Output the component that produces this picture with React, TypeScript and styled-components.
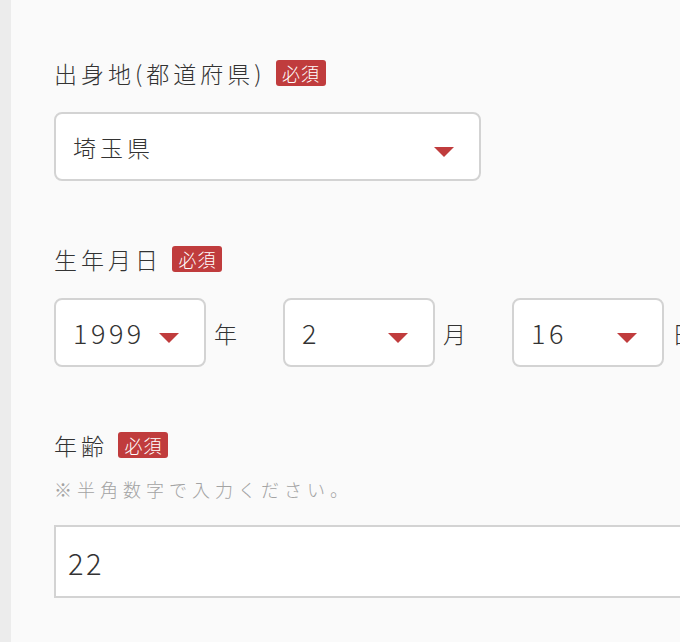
import React from "react";
import styled, { createGlobalStyle } from "styled-components";

const GlobalStyle = createGlobalStyle`
  html, body {
    margin: 0;
    padding: 0;
    background: #fafafa;
    overflow: hidden;
  }
  body {
    font-family: "Noto Sans CJK JP", "Noto Sans", sans-serif;
    color: #333;
  }
`;

const Page = styled.div`
  display: flex;
  width: 680px;
  height: 642px;
  overflow: hidden;
`;

const SideStrip = styled.div`
  flex: 0 0 11px;
  background: #ececec;
`;

const Main = styled.main`
  flex: 1;
  background: #fafafa;
  padding: 60px 0 0 43px;
  overflow: hidden;
`;

const Field = styled.section`
  display: flex;
  flex-direction: column;
  margin-bottom: 65px;
`;

const LabelRow = styled.div`
  display: flex;
  align-items: center;
  height: 26px;
  gap: 10px;
  margin-bottom: 26px;
  white-space: nowrap;
`;

const LabelText = styled.span`
  font-size: 23px;
  font-weight: 300;
  letter-spacing: 4px;
  line-height: 26px;
  color: #333;
`;

const Badge = styled.span`
  display: inline-flex;
  align-items: center;
  justify-content: center;
  width: 50px;
  height: 26px;
  border-radius: 3px;
  background: #c03c3d;
  color: #fff;
  font-size: 18px;
  font-weight: 300;
  letter-spacing: 1px;
  text-indent: 1px;
`;

const Hint = styled.p`
  margin: -6px 0 25px;
  font-size: 18px;
  font-weight: 300;
  line-height: 22px;
  letter-spacing: 5px;
  color: #a3a3a3;
  white-space: nowrap;
`;

const SelectBox = styled.div<{ $width: number }>`
  box-sizing: border-box;
  display: flex;
  align-items: center;
  justify-content: space-between;
  width: ${(p) => p.$width}px;
  height: 69px;
  padding: 0 25px 0 17px;
  background: #fff;
  border: 2px solid #d3d3d3;
  border-radius: 8px;
  flex: 0 0 auto;
`;

const SelectValue = styled.span<{ $numeric?: boolean }>`
  font-size: ${(p) => (p.$numeric ? 27 : 23)}px;
  font-weight: 300;
  letter-spacing: ${(p) => (p.$numeric ? 3.5 : 4)}px;
  color: #333;
`;

const Arrow = styled.span`
  width: 0;
  height: 0;
  margin-top: 10px;
  border-left: 10.5px solid transparent;
  border-right: 10.5px solid transparent;
  border-top: 10px solid #c03c3d;
`;

const DateRow = styled.div`
  display: flex;
  align-items: center;
  gap: 46px;
  white-space: nowrap;
`;

const DateGroup = styled.div`
  display: flex;
  align-items: center;
  gap: 8px;
  flex: 0 0 auto;
`;

const Unit = styled.span`
  font-size: 23px;
  font-weight: 300;
  color: #333;
`;

const TextInput = styled.div`
  box-sizing: border-box;
  display: flex;
  align-items: center;
  width: 700px;
  height: 73px;
  padding: 0 12px;
  background: #fff;
  border: 2px solid #d3d3d3;
  font-size: 29px;
  font-weight: 300;
  letter-spacing: 2.5px;
  color: #333;
`;

const Select = ({
  value,
  width,
  numeric,
}: {
  value: string;
  width: number;
  numeric?: boolean;
}) => (
  <SelectBox $width={width}>
    <SelectValue $numeric={numeric}>{value}</SelectValue>
    <Arrow />
  </SelectBox>
);

const Label = ({ text }: { text: string }) => (
  <LabelRow>
    <LabelText>{text}</LabelText>
    <Badge>必須</Badge>
  </LabelRow>
);

export default function App() {
  const dates = [
    { value: "1999", unit: "年" },
    { value: "2", unit: "月" },
    { value: "16", unit: "日" },
  ];
  return (
    <>
      <GlobalStyle />
      <Page>
        <SideStrip />
        <Main>
          <Field>
            <Label text="出身地(都道府県)" />
            <Select value="埼玉県" width={427} />
          </Field>
          <Field>
            <Label text="生年月日" />
            <DateRow>
              {dates.map((d) => (
                <DateGroup key={d.unit}>
                  <Select value={d.value} width={152} numeric />
                  <Unit>{d.unit}</Unit>
                </DateGroup>
              ))}
            </DateRow>
          </Field>
          <Field>
            <Label text="年齢" />
            <Hint>※半角数字で入力ください。</Hint>
            <TextInput>22</TextInput>
          </Field>
        </Main>
      </Page>
    </>
  );
}
